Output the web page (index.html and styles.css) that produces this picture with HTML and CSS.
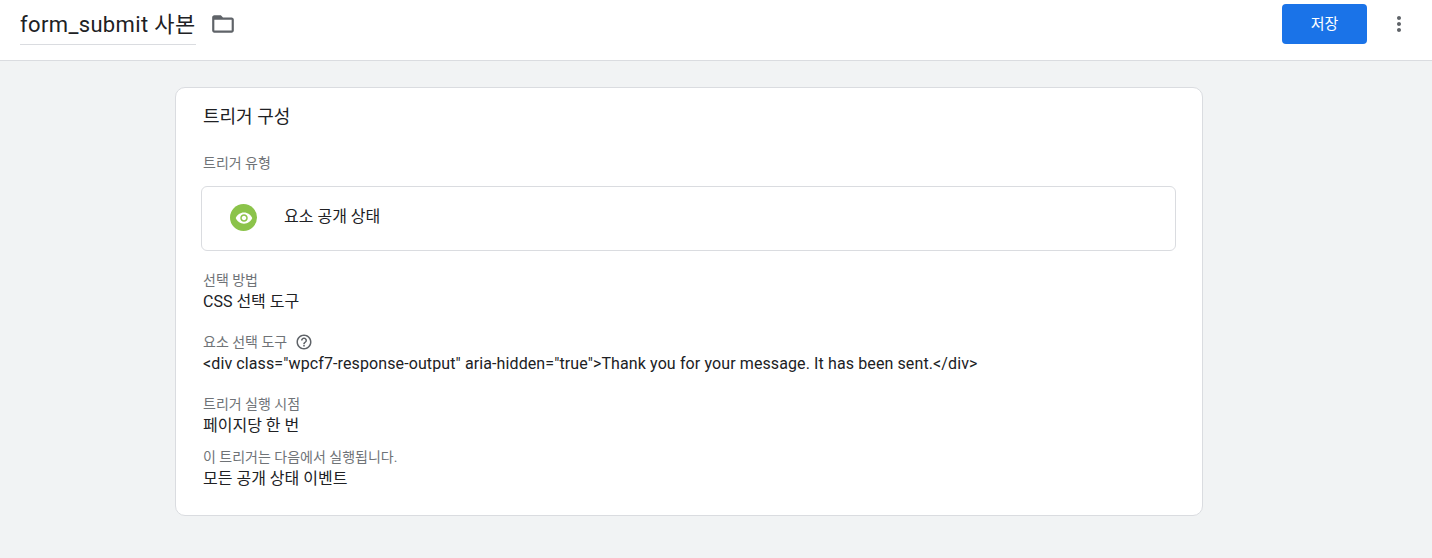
FILE: index.html
```html
<!DOCTYPE html>
<html lang="ko">
<head>
<meta charset="utf-8">
<title>form_submit 사본</title>
<link rel="stylesheet" href="styles.css">
</head>
<body>
<header class="topbar">
  <div class="title-group">
    <div class="title">form_submit 사본</div>
    <svg class="folder" width="26" height="26" viewBox="0 0 24 24"><path fill="#5f6368" d="M20 6h-8l-2-2H4c-1.100 0-2 .9-2 2v12c0 1.100.9 2 2 2h16c1.100 0 2-.9 2-2V8c0-1.100-.9-2-2-2zm0 12H4V8h16v10z"/></svg>
  </div>
  <div class="actions">
    <button class="save">저장</button>
    <svg class="more" width="24" height="24" viewBox="0 0 24 24"><path fill="#5f6368" d="M12 8c1.100 0 2-.9 2-2s-.9-2-2-2-2 .9-2 2 .9 2 2 2zm0 2c-1.100 0-2 .9-2 2s.9 2 2 2 2-.9 2-2-.9-2-2-2zm0 6c-1.100 0-2 .9-2 2s.9 2 2 2 2-.9 2-2-.9-2-2-2z"/></svg>
  </div>
</header>
<main class="content">
  <section class="card">
    <h2 class="card-title">트리거 구성</h2>
    <div class="label type-label">트리거 유형</div>
    <div class="type-box">
      <span class="type-icon">
        <svg width="18" height="18" viewBox="0 0 24 24"><path fill="#fff" d="M12 4.500C7 4.500 2.730 7.610 1 12c1.730 4.390 6 7.500 11 7.500s9.270-3.110 11-7.500c-1.730-4.390-6-7.500-11-7.500zM12 17c-2.760 0-5-2.240-5-5s2.240-5 5-5 5 2.240 5 5-2.240 5-5 5zm0-8c-1.660 0-3 1.340-3 3s1.340 3 3 3 3-1.340 3-3-1.340-3-3-3z"/></svg>
      </span>
      <span class="type-name">요소 공개 상태</span>
    </div>
    <div class="field method">
      <div class="label">선택 방법</div>
      <div class="value">CSS 선택 도구</div>
    </div>
    <div class="field selector">
      <div class="label label-help">요소 선택 도구
        <svg width="18" height="18" viewBox="0 0 24 24"><path fill="#5f6368" d="M11 18h2v-2h-2v2zm1-16C6.480 2 2 6.480 2 12s4.480 10 10 10 10-4.480 10-10S17.520 2 12 2zm0 18c-4.410 0-8-3.590-8-8s3.590-8 8-8 8 3.590 8 8-3.590 8-8 8zm0-14c-2.210 0-4 1.790-4 4h2c0-1.100.9-2 2-2s2 .9 2 2c0 2-3 1.750-3 5h2c0-2.250 3-2.500 3-5 0-2.210-1.790-4-4-4z"/></svg>
      </div>
      <div class="value value-code">&lt;div class="wpcf7-response-output" aria-hidden="true"&gt;Thank you for your message. It has been sent.&lt;/div&gt;</div>
    </div>
    <div class="field fire">
      <div class="label">트리거 실행 시점</div>
      <div class="value">페이지당 한 번</div>
    </div>
    <div class="field events">
      <div class="label">이 트리거는 다음에서 실행됩니다.</div>
      <div class="value">모든 공개 상태 이벤트</div>
    </div>
  </section>
</main>
</body>
</html>
```
FILE: styles.css
```css
* { box-sizing: border-box; }
html, body { margin: 0; height: 100%; }
body {
  background: #f1f3f4;
  color: #202124;
  font-family: Roboto, "Noto Sans CJK KR", sans-serif;
  overflow: hidden;
}
.topbar {
  height: 61px;
  background: #fff;
  border-bottom: 1px solid #dadce0;
  display: flex;
  justify-content: space-between;
  padding: 4px 21px 0 20px;
}
.title-group { display: flex; align-items: flex-start; gap: 14px; }
.title {
  font-size: 22px;
  letter-spacing: 0.36px;
  line-height: 42px;
  height: 41px;
  border-bottom: 1px solid #dadce0;
  white-space: nowrap;
}
.folder { margin-top: 7px; }
.actions { display: flex; align-items: flex-start; gap: 20px; }
.save {
  width: 85px;
  height: 40px;
  background: #1a73e8;
  color: #fff;
  border: 0;
  border-radius: 4px;
  font: 15px/40px Roboto, "Noto Sans CJK KR", sans-serif;
  padding: 0;
}
.more { margin-top: 8px; }
.content { padding: 26px 229px 0 175px; }
.card {
  width: 1028px;
  height: 429px;
  background: #fff;
  border: 1px solid #dadce0;
  border-radius: 10px;
  padding: 0 26px 0 27px;
}
.card-title {
  margin: 0;
  padding-top: 16px;
  font-size: 18px;
  font-weight: 400;
  line-height: 26px;
}
.label { font-size: 14px; line-height: 18px; color: #6f7377; }
.value { font-size: 16px; line-height: 26px; color: #202124; white-space: nowrap; }
.value-code { letter-spacing: 0.11px; }
.type-label { margin-top: 24px; }
.type-box {
  margin: 14px 0 0 -2px;
  height: 65px;
  border: 1px solid #dadce0;
  border-radius: 6px;
  display: flex;
  align-items: center;
  padding-left: 28px;
}
.type-icon {
  width: 27px;
  height: 27px;
  border-radius: 50%;
  background: #8bc34a;
  display: flex;
  align-items: center;
  justify-content: center;
  margin-bottom: 2px;
}
.type-name { margin: 0 0 3px 27px; font-size: 16px; line-height: 22px; }
.method { margin-top: 20px; }
.selector { margin-top: 18px; }
.label-help { display: flex; align-items: center; gap: 8px; }
.fire { margin-top: 18px; }
.events { margin-top: 9px; }
```
